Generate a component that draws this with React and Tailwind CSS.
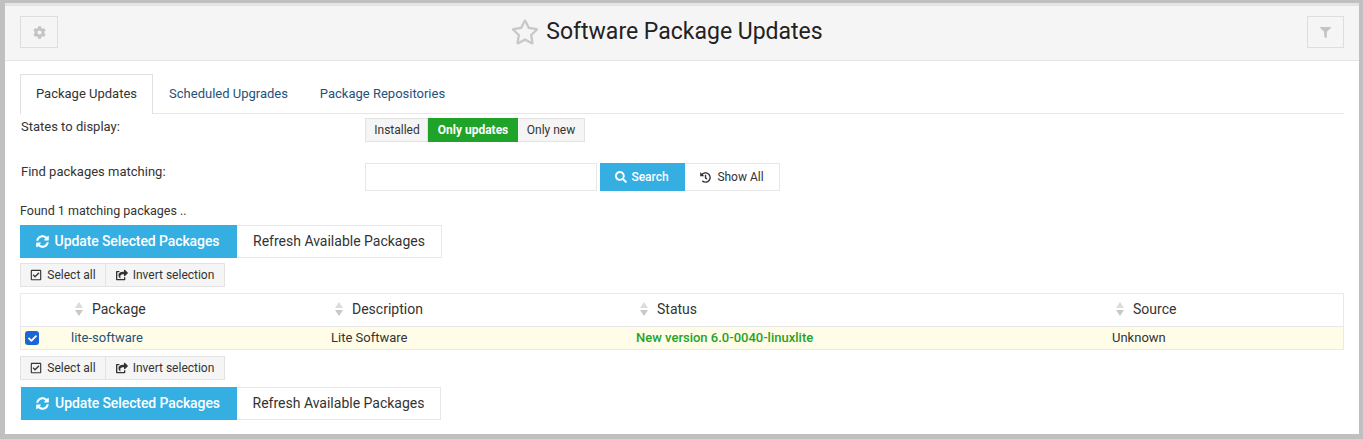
import React from 'react';
import { FaCog, FaFilter, FaRegStar, FaSearch, FaHistory, FaSyncAlt, FaRegCheckSquare, FaShareSquare, FaCheck } from 'react-icons/fa';

const SortArrows = () => (
  <svg width="8" height="16" viewBox="0 0 8 16" className="shrink-0">
    <path d="M4 1 L8 7 L0 7 Z" fill="#dcdcdc" />
    <path d="M4 15 L8 9 L0 9 Z" fill="#c8c8c8" />
  </svg>
);

const SelectBar = () => (
  <div className="flex h-6 w-fit text-xs text-[#333]">
    <button className="flex w-[86px] items-center justify-center gap-[5px] border border-[#e3e3e3] bg-[#f5f5f5]">
      <FaRegCheckSquare size={12} />
      <span>Select all</span>
    </button>
    <button className="-ml-px flex w-[120px] items-center justify-center gap-[5px] border border-[#e3e3e3] bg-[#f5f5f5]">
      <FaShareSquare size={12} />
      <span>Invert selection</span>
    </button>
  </div>
);

const ActionBar = ({ updateWidth, refreshWidth, className }) => (
  <div className={`flex h-[33px] w-fit text-sm ${className}`}>
    <button className={`flex items-center justify-center gap-[6px] bg-[#35aee2] pr-[2px] pb-px font-medium tracking-[-0.1px] text-white ${updateWidth}`}>
      <FaSyncAlt size={13} />
      <span>Update Selected Packages</span>
    </button>
    <button className={`border border-l-0 border-[#e7e7e7] bg-white pb-[2px] text-[#333] ${refreshWidth}`}>
      Refresh Available Packages
    </button>
  </div>
);

const HeadCell = ({ label, className }) => (
  <div className={`flex items-center gap-[9px] ${className}`}>
    <SortArrows />
    <span>{label}</span>
  </div>
);

export default function App() {
  return (
    <div className="h-[439px] w-[1363px] overflow-hidden bg-[#c0c0c0] pt-[3px] pl-[5px] pr-[4px] pb-[5px] text-[#333]" style={{ fontFamily: 'Roboto, "Liberation Sans", sans-serif' }}>
      <div className="flex h-full flex-col border-t-[3px] border-[#e4e4e4] bg-white">
        {/* Header */}
        <div className="flex h-[55px] shrink-0 items-start justify-between border-b border-[#e4e4e4] bg-[#f5f5f5] px-[15px] pt-[10px]">
          <button className="flex h-[32px] w-[38px] items-center justify-center border border-[#dedede] text-[#c4c4c4]">
            <FaCog size={13} />
          </button>
          <div className="flex h-[32px] flex-1 items-center justify-center gap-[7px] pr-[31px]">
            <FaRegStar size={28} className="text-[#c8c8c8]" />
            <h1 className="text-[23px] font-normal text-[#222]">Software Package Updates</h1>
          </div>
          <button className="flex h-[32px] w-[37px] items-center justify-center border border-[#dedede] text-[#c4c4c4]">
            <FaFilter size={11} />
          </button>
        </div>

        <div className="flex-1 px-[15px] pt-[13px]">
          {/* Tabs */}
          <div className="flex h-[40px] border-b border-[#e7e7e7] text-[13px]">
            <div className="-mb-px flex h-[40px] w-[133px] items-center justify-center border border-b-0 border-[#e0e0e0] bg-white pb-[2px] text-[#333]">Package Updates</div>
            <div className="flex w-[151px] items-center justify-center text-[#23527c]">Scheduled Upgrades</div>
            <div className="flex w-[157px] items-center justify-center text-[#23527c]">Package Repositories</div>
          </div>

          {/* States */}
          <div className="mt-[4px] flex h-[24px] text-[13px]">
            <div className="w-[345px] pl-px leading-[18px]">States to display:</div>
            <div className="flex text-xs">
              <div className="flex w-[63px] items-center justify-center border border-[#e3e3e3] bg-[#f5f5f5] pl-px">Installed</div>
              <div className="flex w-[90px] items-center justify-center bg-[#1fa329] font-bold text-white">Only updates</div>
              <div className="flex w-[67px] items-center justify-center border border-l-0 border-[#e3e3e3] bg-[#f5f5f5]">Only new</div>
            </div>
          </div>

          {/* Search */}
          <div className="mt-[21px] flex h-[28px] text-[13px]">
            <div className="w-[345px] pl-px leading-[17px]">Find packages matching:</div>
            <input className="h-[28px] w-[232px] border border-[#e7e7e7] bg-white" />
            <button className="ml-[3px] flex w-[85px] items-center justify-center gap-[4px] bg-[#35aee2] pr-px text-xs font-medium text-white">
              <FaSearch size={12} />
              <span>Search</span>
            </button>
            <button className="flex w-[95px] items-center justify-center gap-[6px] border border-l-0 border-[#e7e7e7] bg-white text-xs text-[#333]">
              <FaHistory size={11} />
              <span>Show All</span>
            </button>
          </div>

          <p className="mt-[12px] h-[16px] text-[12.5px] leading-[16px]">Found 1 matching packages ..</p>
          <ActionBar className="mt-[6px]" updateWidth="w-[217px]" refreshWidth="w-[205px]" />
          <div className="mt-[5px]"><SelectBar /></div>

          {/* Table */}
          <div className="mt-[6px] border border-[#eaeaea] text-sm">
            <div className="flex h-[33px] items-center border-b border-[#e7e7e7] pb-[2px]">
              <HeadCell label="Package" className="w-[311px] pl-[54px]" />
              <HeadCell label="Description" className="w-[308px] pl-[3px]" />
              <HeadCell label="Status" className="w-[476px]" />
              <HeadCell label="Source" className="" />
            </div>
            <div className="flex h-[22px] items-center bg-[#fffde8] text-[13px]">
              <div className="flex w-[50px] pl-[4px]">
                <span className="flex h-[14px] w-[14px] items-center justify-center rounded-[3px] bg-[#1a66d6] text-white"><FaCheck size={9} /></span>
              </div>
              <div className="w-[260px] text-[#23527c]">lite-software</div>
              <div className="w-[305px]">Lite Software</div>
              <div className="w-[476px] font-medium text-[#1fa329]">New version 6.0-0040-linuxlite</div>
              <div>Unknown</div>
            </div>
          </div>

          <div className="mt-[6px]"><SelectBar /></div>
          <ActionBar className="mt-[7px] ml-px" updateWidth="w-[216px]" refreshWidth="w-[204px]" />
        </div>
      </div>
    </div>
  );
}
